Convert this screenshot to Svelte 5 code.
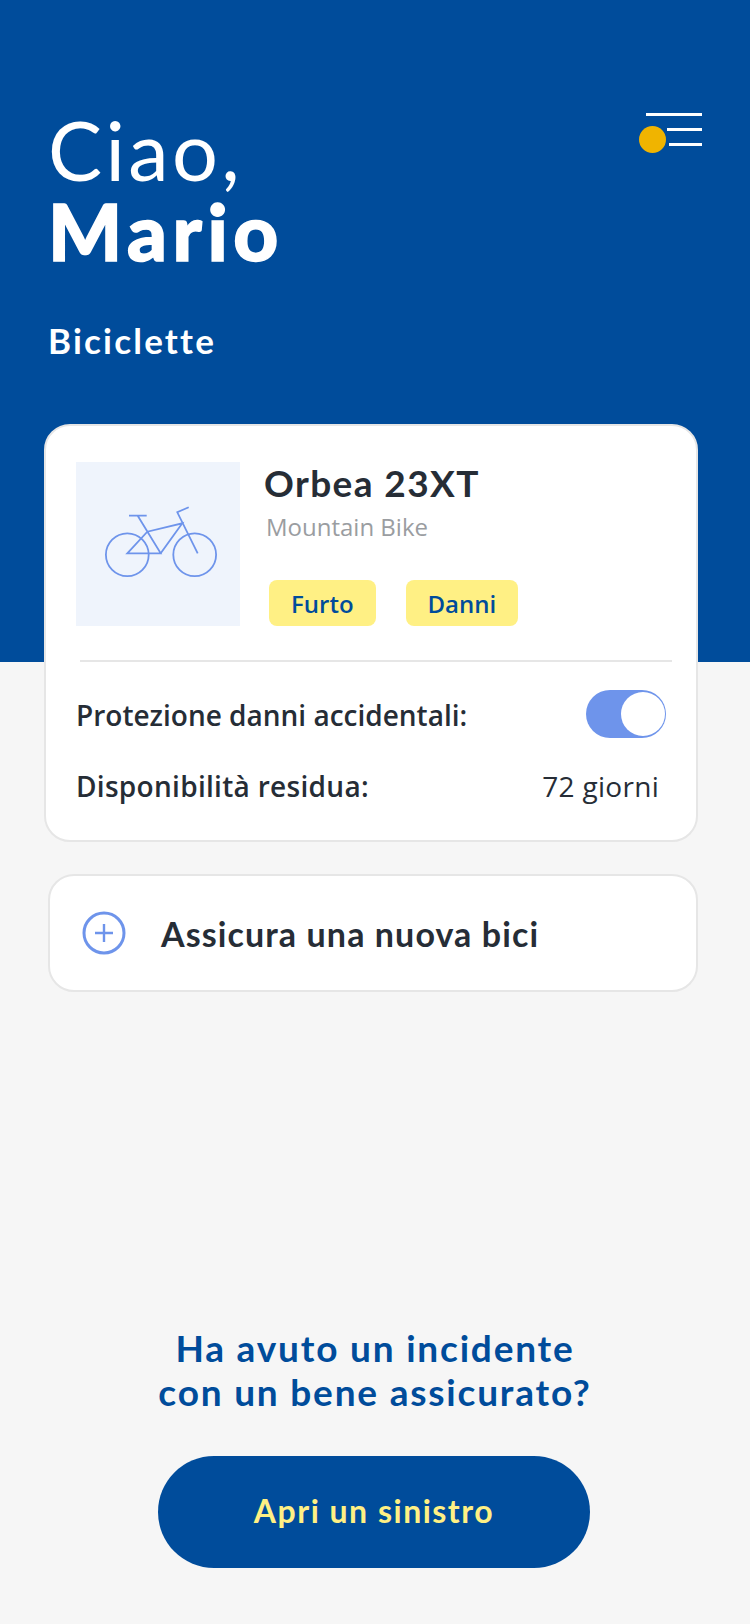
<script>
  let protezione = $state(true);
  const tags = ['Furto', 'Danni'];
</script>

<div class="page">
  <header class="hero">
    <div class="top">
      <h1><span class="hello">Ciao,</span><strong>Mario</strong></h1>
      <button class="menu" aria-label="Menu">
        <i class="line l1"></i>
        <i class="line l2"></i>
        <i class="line l3"></i>
        <i class="dot"></i>
      </button>
    </div>
    <h2>Biciclette</h2>
  </header>

  <main>
    <section class="card">
      <div class="bike">
        <div class="thumb">
          <svg width="164" height="164" viewBox="76 462 164 164" fill="none" stroke="#6e94eb" stroke-width="1.8">
            <circle cx="127.3" cy="554.7" r="21.4" />
            <circle cx="194.7" cy="554.7" r="21.4" />
            <path d="M129 515.7h17.7M137.7 515.7l23 37.6h-33.4l20-21.6 35-8.4-21.6 30" />
            <path d="M197.7 553.3l-20.4-41 11.4-5" />
          </svg>
        </div>
        <div class="info">
          <h3>Orbea 23XT</h3>
          <p>Mountain Bike</p>
          <div class="tags">
            {#each tags as t}
              <span class="tag">{t}</span>
            {/each}
          </div>
        </div>
      </div>
      <hr />
      <div class="row first">
        <b>Protezione danni accidentali:</b>
        <button class="toggle" class:on={protezione} aria-label="Protezione danni accidentali" onclick={() => (protezione = !protezione)}></button>
      </div>
      <div class="row second">
        <b>Disponibilità residua:</b>
        <span>72 giorni</span>
      </div>
    </section>

    <button class="add">
      <svg width="44" height="44" viewBox="0 0 44 44" fill="none" stroke="#6e94eb" stroke-width="3">
        <circle cx="22" cy="22" r="20" />
        <path d="M22 13v18M13 22h18" stroke-width="2.4" />
      </svg>
      <span>Assicura una nuova bici</span>
    </button>

    <div class="claim">
      <p>Ha avuto un incidente<br />con un bene assicurato?</p>
      <button class="cta">Apri un sinistro</button>
    </div>
  </main>
</div>

<style>
  :global(body) {
    background: #f6f6f6;
  }
  .page {
    width: 750px;
    height: 1624px;
    overflow: hidden;
    background: #f6f6f6;
    font-family: "Open Sans", sans-serif;
    color: #262d36;
  }
  button {
    border: 0;
    padding: 0;
    background: none;
    font: inherit;
    color: inherit;
  }
  .hero {
    height: 662px;
    box-sizing: border-box;
    background: #004c9b;
    color: #fff;
    padding: 110px 48px 0 48px;
    font-family: Lato, sans-serif;
  }
  .top {
    display: flex;
    justify-content: space-between;
    align-items: flex-start;
  }
  h1 {
    margin: 0;
    font-weight: 400;
    font-size: 81px;
    line-height: 79px;
    letter-spacing: 3.4px;
  }
  h1 span,
  h1 strong {
    display: block;
  }
  h1 strong {
    margin-top: 3px;
    font-weight: 900;
    font-size: 78px;
    letter-spacing: 5.6px;
    -webkit-text-stroke: 1.5px #fff;
  }
  .menu {
    position: relative;
    width: 63px;
    height: 46px;
    margin-top: 3px;
  }
  .line {
    position: absolute;
    right: 0;
    height: 2.5px;
    background: #fff;
  }
  .l1 { top: 0; width: 56px; }
  .l2 { top: 15px; width: 35px; }
  .l3 { top: 30px; width: 33px; }
  .dot {
    position: absolute;
    left: 0;
    top: 13px;
    width: 27px;
    height: 27px;
    border-radius: 50%;
    background: #f0b400;
  }
  h2 {
    margin: 47px 0 0;
    font-size: 35px;
    line-height: 44px;
    font-weight: 700;
    letter-spacing: 2.2px;
  }

  main {
    margin-top: -238px;
    display: flex;
    flex-direction: column;
  }
  .card {
    box-sizing: border-box;
    margin-left: 44px;
    width: 654px;
    height: 418px;
    padding: 36px 24px 0 30px;
    background: #fff;
    border: 2px solid #e6e6e6;
    border-radius: 26px;
  }
  .bike {
    display: flex;
    gap: 24px;
  }
  .thumb {
    width: 164px;
    height: 164px;
    background: #eff4fc;
  }
  .thumb svg {
    display: block;
  }
  .info h3 {
    margin: -1px 0 0;
    font-family: Lato, sans-serif;
    font-weight: 700;
    font-size: 37px;
    line-height: 44px;
    letter-spacing: 1.4px;
  }
  .info p {
    margin: 6px 0 0 2px;
    font-size: 24px;
    line-height: 32px;
    color: #9a9da1;
  }
  .tags {
    display: flex;
    gap: 30px;
    margin: 37px 0 0 5px;
  }
  .tag {
    height: 46px;
    padding: 0 22px;
    border-radius: 8px;
    background: #fff084;
    color: #004c9b;
    font-weight: 600;
    font-size: 24px;
    line-height: 48px;
  }
  hr {
    margin: 34px 0 0 4px;
    width: 592px;
    height: 2px;
    border: 0;
    background: #e6e6e6;
  }
  .row {
    display: flex;
    justify-content: space-between;
    align-items: center;
    font-size: 28px;
    line-height: 36px;
  }
  .row b {
    font-weight: 600;
  }
  .row.first {
    height: 48px;
    margin-top: 28px;
  }
  .row.first b {
    margin-top: 2px;
  }
  .row.second {
    margin-top: 30px;
    padding-right: 13px;
    letter-spacing: 0.3px;
  }
  .toggle {
    position: relative;
    width: 80px;
    height: 48px;
    margin-right: 6px;
    border-radius: 24px;
    background: #6e94eb;
  }
  .toggle::after {
    content: "";
    position: absolute;
    top: 2px;
    right: 1.5px;
    width: 44px;
    height: 44px;
    border-radius: 50%;
    background: #fff;
  }
  .add {
    box-sizing: border-box;
    margin: 32px 0 0 48px;
    width: 650px;
    height: 118px;
    padding-left: 32px;
    display: flex;
    align-items: center;
    gap: 35px;
    background: #fff;
    border: 2px solid #e6e6e6;
    border-radius: 26px;
    font-family: Lato, sans-serif;
    font-weight: 700;
    font-size: 34px;
    letter-spacing: 1.1px;
  }
  .add svg {
    flex: none;
  }
  .claim {
    margin-top: 334px;
    display: flex;
    flex-direction: column;
    align-items: center;
    font-family: Lato, sans-serif;
  }
  .claim p {
    margin: 0;
    text-align: center;
    color: #004c9b;
    font-weight: 700;
    font-size: 37px;
    line-height: 44px;
    letter-spacing: 1.8px;
  }
  .cta {
    margin: 42px 2px 0 0;
    width: 432px;
    height: 112px;
    padding-bottom: 3px;
    border-radius: 56px;
    background: #004c9b;
    color: #fff084;
    font-weight: 700;
    font-size: 32px;
    letter-spacing: 1.5px;
  }
</style>
